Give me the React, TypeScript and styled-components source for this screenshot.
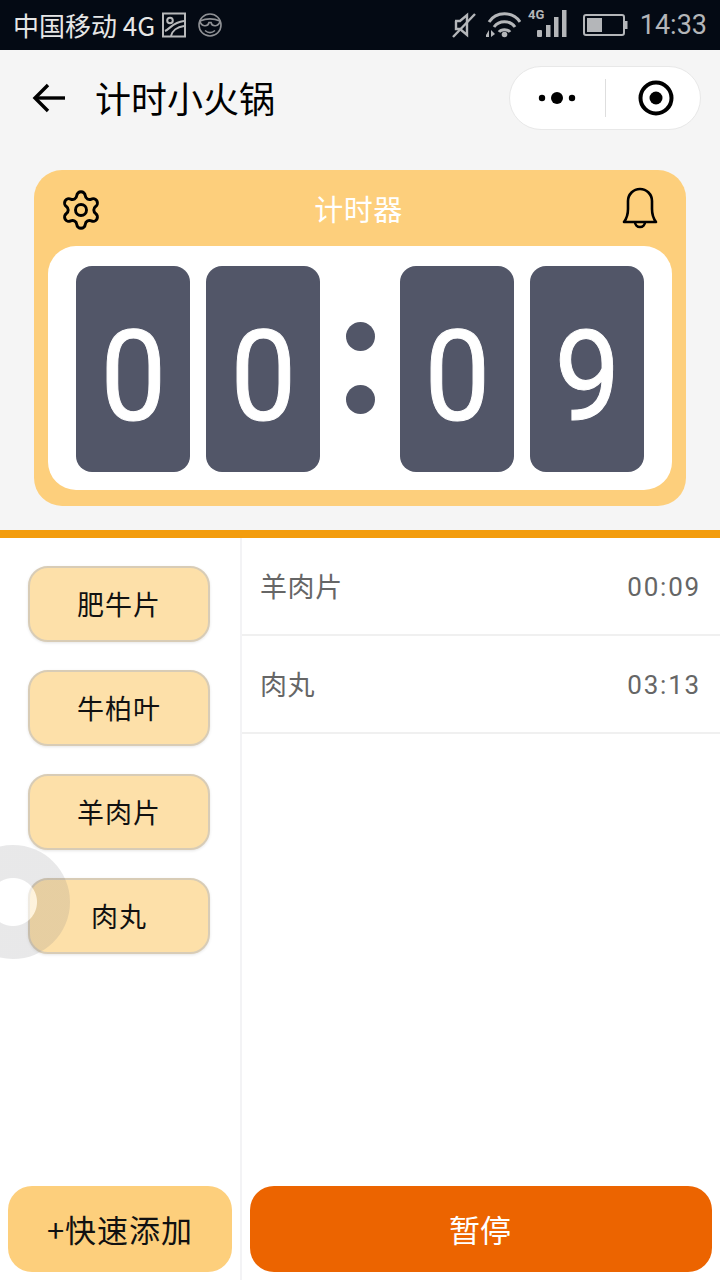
import React from 'react';
import styled, { createGlobalStyle } from 'styled-components';
import { Settings } from 'lucide-react';

const CJK = `"Noto Sans CJK SC", "Noto Sans", sans-serif`;

const GlobalStyle = createGlobalStyle`
  html, body {
    margin: 0;
    padding: 0;
    background: #fff;
    font-family: ${CJK};
  }
  * { box-sizing: border-box; }
`;

const Page = styled.div`
  position: relative;
  width: 720px;
  height: 1280px;
  overflow: hidden;
  display: flex;
  flex-direction: column;
`;

const StatusBar = styled.div`
  height: 50px;
  flex: none;
  background: #040a14;
  display: flex;
  align-items: center;
  padding: 0 13px;
`;

const Carrier = styled.span`
  color: #e6e6e6;
  font-size: 26px;
  line-height: 50px;
  white-space: nowrap;
`;

const Clock = styled.span`
  color: #b4b6b9;
  font-family: Roboto, sans-serif;
  font-size: 27px;
  line-height: 52px;
  margin-left: 12px;
`;

const Spacer = styled.div`
  flex: 1;
`;

const StatusIcon = styled.svg<{ $gap?: number }>`
  flex: none;
  margin-left: ${(p) => p.$gap ?? 0}px;
  display: block;
`;

const TopArea = styled.div`
  height: 480px;
  flex: none;
  background: #f5f5f5;
  display: flex;
  flex-direction: column;
`;

const NavBar = styled.div`
  height: 120px;
  flex: none;
  display: flex;
  align-items: flex-start;
  padding: 16px 19px 0 32px;
`;

const BackIcon = styled.svg`
  flex: none;
  margin-top: 17px;
`;

const NavTitle = styled.h1`
  margin: 0 0 0 29px;
  font-size: 36px;
  font-weight: 400;
  line-height: 62px;
  color: #000;
`;

const Capsule = styled.div`
  margin-left: auto;
  width: 192px;
  height: 64px;
  background: #fff;
  border: 1px solid #e8e8e8;
  border-radius: 32px;
  display: flex;
  align-items: center;
`;

const CapsuleHalf = styled.div<{ $nudge: number }>`
  width: ${(p) => (p.$nudge < 0 ? 95 : 94)}px;
  flex: none;
  display: flex;
  align-items: center;
  justify-content: center;
  padding-left: ${(p) => Math.max(p.$nudge, 0)}px;
  padding-right: ${(p) => Math.max(-p.$nudge, 0)}px;
`;

const CapsuleLine = styled.div`
  width: 1px;
  height: 38px;
  background: #dedede;
`;

const TimerCard = styled.section`
  margin: 0 34px;
  height: 336px;
  background: #fdcf7c;
  border-radius: 28px;
  padding: 0 14px 16px;
  display: flex;
  flex-direction: column;
`;

const TimerHead = styled.div`
  height: 76px;
  flex: none;
  display: flex;
  align-items: center;
  justify-content: space-between;
  padding: 0 13px 0 11px;
`;

const GearIcon = styled(Settings)`
  margin-top: 3px;
`;

const TimerTitle = styled.span`
  color: #fff;
  font-size: 29px;
  letter-spacing: 0.5px;
  line-height: 82px;
  margin-right: 7px;
`;

const Face = styled.div`
  flex: 1;
  background: #fff;
  border-radius: 28px;
  display: flex;
  align-items: flex-start;
  padding: 20px 28px 0;
`;

const Digit = styled.div<{ $gap?: number }>`
  width: 114px;
  height: 206px;
  margin-left: ${(p) => p.$gap ?? 0}px;
  background: #525668;
  border-radius: 16px;
  color: #fff;
  font-family: Roboto, sans-serif;
  font-size: 126px;
  line-height: 222px;
  text-align: center;
`;

// the reference digit is narrower and a little heavier than Roboto's
const DigitGlyph = styled.span`
  display: inline-block;
  transform: scaleX(0.93);
  -webkit-text-stroke: 1px #fff;
`;

const Colon = styled.div`
  width: 80px;
  height: 206px;
  display: flex;
  flex-direction: column;
  align-items: center;
  gap: 34px;
  padding-top: 56px;
`;

const Dot = styled.span`
  width: 29px;
  height: 29px;
  border-radius: 50%;
  background: #525668;
`;

const AccentLine = styled.div`
  height: 8px;
  flex: none;
  background: #f39c0d;
`;

const Split = styled.div`
  flex: 1;
  display: flex;
  min-height: 0;
`;

const LeftCol = styled.div`
  width: 242px;
  flex: none;
  border-right: 2px solid #f3f3f5;
  display: flex;
  flex-direction: column;
  padding: 0 8px 8px;
`;

const PresetList = styled.div`
  flex: 1;
  display: flex;
  flex-direction: column;
  align-items: center;
  gap: 28px;
  padding: 28px 14px 0 12px;
`;

const PresetButton = styled.button`
  width: 182px;
  height: 76px;
  flex: none;
  background: #fde0a9;
  border: 2px solid #d8ccb6;
  border-radius: 20px;
  box-shadow: 0 1px 3px rgba(0, 0, 0, 0.1);
  color: #111;
  font-family: ${CJK};
  font-size: 27px;
  letter-spacing: 1px;
  padding: 0 0 2px;
`;

const QuickAdd = styled.button`
  width: 224px;
  height: 86px;
  flex: none;
  background: #fdcf7c;
  border: none;
  border-radius: 24px;
  color: #111;
  font-family: ${CJK};
  font-size: 31px;
  letter-spacing: 1px;
  padding: 0 0 2px;
`;

const RightCol = styled.div`
  flex: 1;
  display: flex;
  flex-direction: column;
  padding-bottom: 8px;
`;

const Rows = styled.div`
  flex: 1;
`;

const Row = styled.div`
  height: 98px;
  border-bottom: 2px solid #f0f0f0;
  display: flex;
  align-items: flex-start;
  justify-content: space-between;
  padding: 28px 19px 0 18px;
  color: #666;
  font-size: 27px;
  letter-spacing: 0.6px;
  line-height: 40px;
`;

const RowTime = styled.span`
  font-family: Roboto, sans-serif;
  font-size: 26px;
  letter-spacing: 1.8px;
  padding-top: 1px;
`;

const PauseButton = styled.button`
  margin-left: 8px;
  width: 462px;
  height: 86px;
  flex: none;
  background: #ec6400;
  border: none;
  border-radius: 24px;
  color: #fff;
  font-family: ${CJK};
  font-size: 31px;
  padding: 0 2px 2px 0;
`;

const FloatBall = styled.div`
  position: absolute;
  left: -44px;
  top: 845px;
  width: 114px;
  height: 114px;
  border-radius: 50%;
  background: radial-gradient(
    circle,
    rgba(255, 255, 255, 0.6) 23.5px,
    rgba(120, 120, 125, 0.17) 24.5px
  );
`;

const presets = ['肥牛片', '牛柏叶', '羊肉片', '肉丸'];
const running = [
  { name: '羊肉片', time: '00:09' },
  { name: '肉丸', time: '03:13' },
];

function BellIcon() {
  return (
    <svg width="38" height="42" viewBox="0 0 38 42" fill="none" stroke="#000" strokeWidth="2.6" strokeLinejoin="round">
      <path d="M3 35 C6 31 7 27 7 22 V14 A12 12 0 0 1 31 14 V22 C31 27 32 31 35 35 Z" />
      <path d="M14 35 A5 5 0 0 0 24 35" />
    </svg>
  );
}

function StatusLeftIcons() {
  return (
    <>
      <StatusIcon $gap={7} width="24" height="26" viewBox="0 0 24 26" fill="none" stroke="#b8b9bb" strokeWidth="2">
        <rect x="1" y="1.5" width="22" height="23" />
        <circle cx="8" cy="8.5" r="2.8" />
        <path d="M3 19 C8 17 11 10 22 9" />
        <path d="M9 24 C10 19 15 15 22 14" />
      </StatusIcon>
      <StatusIcon $gap={12} width="24" height="24" viewBox="0 0 24 24" fill="none" stroke="#8f9195" strokeWidth="1.6">
        <circle cx="12" cy="12" r="11" />
        <path d="M2 8 C8 5.5 16 5.5 22 8" />
        <path d="M2 8 C3 14 10 14 11 9.5 H13 C14 14 21 14 22 8" />
        <path d="M7 17.5 C10 20 14 20 17 17.5" />
      </StatusIcon>
    </>
  );
}

function StatusRightIcons() {
  return (
    <>
      <StatusIcon width="24" height="26" viewBox="0 0 24 26" fill="none" stroke="#b4b6b9" strokeWidth="2.4">
        <path d="M3 9 H8 L15 3 V23 L8 17 H4 V9" />
        <path d="M1 25 L23 2" />
      </StatusIcon>
      <StatusIcon $gap={9} width="36" height="26" viewBox="0 0 36 26" fill="none" stroke="#b4b6b9" strokeWidth="3">
        <path d="M4 10 C11 -1 28 -1 35 10" />
        <path d="M9 15 C14 8 25 8 30 15" />
        <path d="M14 20 C16 17 23 17 25 20" />
        <circle cx="19.5" cy="22.5" r="2.8" fill="#b4b6b9" stroke="none" />
        <path d="M1 23 L4 18 V25 H1 Z M6 18 L10 22 L6 25 Z" fill="#b4b6b9" stroke="none" />
      </StatusIcon>
      <StatusIcon $gap={6} width="41" height="40" viewBox="0 0 41 40" fill="#b4b6b9">
        <text x="1" y="13.5" fontFamily="Roboto, sans-serif" fontSize="13" fontWeight="700">4G</text>
        <rect x="10" y="25" width="5" height="7" rx="1" />
        <rect x="19" y="20" width="4.5" height="12" />
        <rect x="27" y="12" width="4.5" height="20" />
        <rect x="35" y="5" width="4.5" height="27" />
      </StatusIcon>
      <StatusIcon $gap={15} width="45" height="24" viewBox="0 0 45 24" fill="none" stroke="#b4b6b9" strokeWidth="2">
        <rect x="1" y="2" width="40" height="20" rx="2" />
        <rect x="4" y="5" width="15" height="14" fill="#b4b6b9" stroke="none" />
        <rect x="42" y="8" width="2.5" height="8" fill="#b4b6b9" stroke="none" />
      </StatusIcon>
    </>
  );
}

export default function App() {
  return (
    <Page>
      <GlobalStyle />
      <StatusBar>
        <Carrier>中国移动 4G</Carrier>
        <StatusLeftIcons />
        <Spacer />
        <StatusRightIcons />
        <Clock>14:33</Clock>
      </StatusBar>

      <TopArea>
        <NavBar>
          <BackIcon width="34" height="30" viewBox="0 0 34 30" fill="none" stroke="#000" strokeWidth="3.4">
            <path d="M33 15 H3" />
            <path d="M16 2 L3 15 L16 28" />
          </BackIcon>
          <NavTitle>计时小火锅</NavTitle>
          <Capsule>
            <CapsuleHalf $nudge={-2}>
              <svg width="38" height="14" viewBox="0 0 38 14" fill="#000">
                <circle cx="4" cy="7" r="3.2" />
                <circle cx="19" cy="7" r="6" />
                <circle cx="34" cy="7" r="3.2" />
              </svg>
            </CapsuleHalf>
            <CapsuleLine />
            <CapsuleHalf $nudge={5}>
              <svg width="36" height="36" viewBox="0 0 36 36">
                <circle cx="18" cy="18" r="15.5" fill="none" stroke="#000" strokeWidth="4" />
                <circle cx="18" cy="18" r="6.5" fill="#000" />
              </svg>
            </CapsuleHalf>
          </Capsule>
        </NavBar>

        <TimerCard>
          <TimerHead>
            <GearIcon size={44} color="#000" strokeWidth={1.6} />
            <TimerTitle>计时器</TimerTitle>
            <BellIcon />
          </TimerHead>
          <Face>
            <Digit><DigitGlyph>0</DigitGlyph></Digit>
            <Digit $gap={16}><DigitGlyph>0</DigitGlyph></Digit>
            <Colon>
              <Dot />
              <Dot />
            </Colon>
            <Digit><DigitGlyph>0</DigitGlyph></Digit>
            <Digit $gap={16}><DigitGlyph>9</DigitGlyph></Digit>
          </Face>
        </TimerCard>
      </TopArea>

      <AccentLine />

      <Split>
        <LeftCol>
          <PresetList>
            {presets.map((name) => (
              <PresetButton key={name}>{name}</PresetButton>
            ))}
          </PresetList>
          <QuickAdd>+快速添加</QuickAdd>
        </LeftCol>
        <RightCol>
          <Rows>
            {running.map((item) => (
              <Row key={item.name}>
                <span>{item.name}</span>
                <RowTime>{item.time}</RowTime>
              </Row>
            ))}
          </Rows>
          <PauseButton>暂停</PauseButton>
        </RightCol>
      </Split>

      <FloatBall />
    </Page>
  );
}
